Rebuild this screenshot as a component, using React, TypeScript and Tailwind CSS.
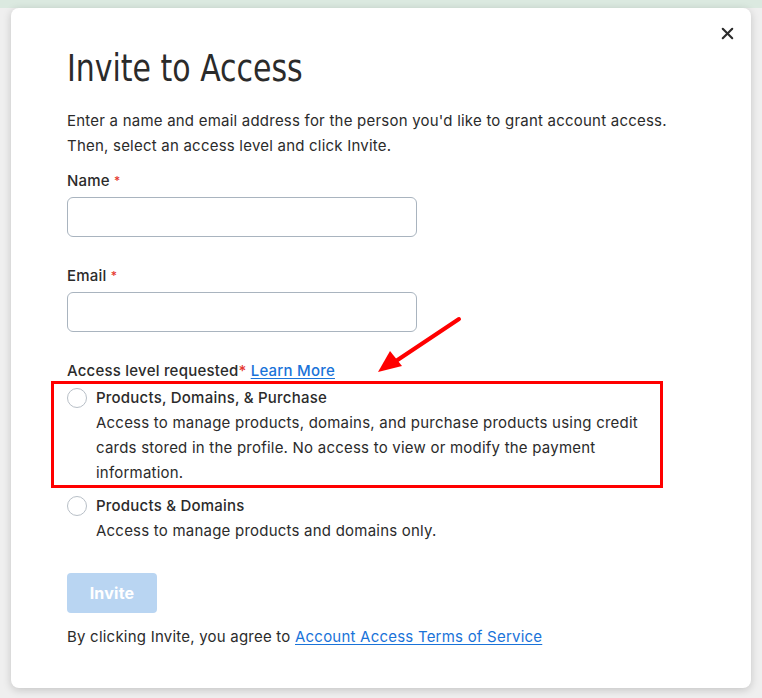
import { X } from "lucide-react"

function Radio({ title, desc }: { title: string; desc: string }) {
  return (
    <div className="flex items-start gap-[9px]">
      <span className="mt-[3px] h-[20px] w-[20px] shrink-0 rounded-full border border-[#b8bfc7] bg-white" />
      <div className="max-w-[570px]">
        <div className="text-[15px] leading-[25px] font-medium text-[#2b2b2b]">{title}</div>
        <div className="text-[15px] leading-[25px] text-[#2b2b2b]">{desc}</div>
      </div>
    </div>
  )
}

export default function App() {
  return (
    <div
      className="min-h-[698px] bg-[#efefef] flex flex-col tracking-[0.22px]"
      style={{ fontFamily: "Inter, 'Liberation Sans', sans-serif" }}
    >
      <div className="h-[8px] bg-[#dbe9e0]" />
      <div className="relative mx-[11px] w-[740px] rounded-[8px] bg-white shadow-[0_2px_8px_rgba(0,0,0,0.18)] pl-[56px] pr-[50px] pt-[41px] pb-[40px] h-[680px]">
        {/* close */}
        <button className="absolute right-[14px] top-[16px] text-[#2b2b2b]">
          <X className="h-[19px] w-[19px]" strokeWidth={2.6} />
        </button>

        <h1
          className="origin-left scale-x-[0.9] text-[37px] leading-[40px] tracking-normal text-[#2b2b2b]"
          style={{ fontFamily: "'DejaVu Sans Condensed', 'Liberation Sans Narrow', sans-serif" }}
        >
          Invite to Access
        </h1>

        <p className="mt-[19px] text-[15px] leading-[25px] text-[#2b2b2b]">
          Enter a name and email address for the person you'd like to grant account access.
          <br />
          Then, select an access level and click Invite.
        </p>

        <label className="mt-[10px] block text-[15px] leading-[25px] font-medium text-[#2b2b2b]">
          Name <span className="text-[12px] text-[#e5372e] align-top">*</span>
        </label>
        <input className="mt-[4px] block h-[40px] w-[350px] rounded-[6px] border border-[#a9b4bf] bg-white outline-none" />

        <label className="mt-[26px] block text-[15px] leading-[25px] font-medium text-[#2b2b2b]">
          Email <span className="text-[12px] text-[#e5372e] align-top">*</span>
        </label>
        <input className="mt-[4px] block h-[40px] w-[350px] rounded-[6px] border border-[#a9b4bf] bg-white outline-none" />

        <div className="mt-[26px] text-[15px] leading-[25px] font-medium text-[#2b2b2b]">
          Access level requested<span className="text-[#e5372e]">*</span>{" "}
          <a href="#" className="text-[#1a73d9] underline underline-offset-2">Learn More</a>
        </div>

        <div className="relative mt-[2px]">
          <div className="absolute left-[-16px] top-[-4px] h-[107px] w-[612px] border-[3px] border-[#ff0000]" />
          <Radio
            title="Products, Domains, & Purchase"
            desc="Access to manage products, domains, and purchase products using credit cards stored in the profile. No access to view or modify the payment information."
          />
          <div className="mt-[8px]">
            <Radio title="Products & Domains" desc="Access to manage products and domains only." />
          </div>
        </div>

        <button className="mt-[30px] block h-[40px] w-[90px] rounded-[4px] bg-[#b9d5f2] text-[16px] font-bold text-white">
          Invite
        </button>

        <p className="mt-[11px] text-[15px] leading-[25px] text-[#2b2b2b]">
          By clicking Invite, you agree to{" "}
          <a href="#" className="text-[#1a73d9] underline underline-offset-2">Account Access Terms of Service</a>
        </p>

        {/* annotation arrow */}
        <svg className="absolute left-[349px] top-[300px]" width="110" height="72" viewBox="0 0 110 72">
          <line x1="99" y1="11" x2="36" y2="53" stroke="#ff0000" strokeWidth="4" strokeLinecap="round" />
          <polygon points="18,64 30,43 42,58" fill="#ff0000" />
        </svg>
      </div>
    </div>
  )
}
